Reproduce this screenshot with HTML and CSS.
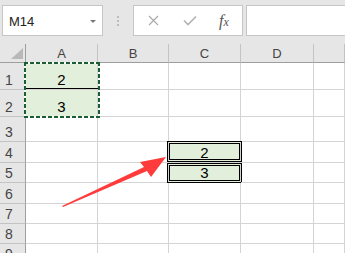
FILE: index.html
```html
<!DOCTYPE html>
<html lang="en">
<head>
  <meta charset="UTF-8">
  <title>Sheet</title>
  <link rel="stylesheet" href="styles.css">
</head>
<body>
  <div class="page">
    <div class="toolbar">
      <div class="name-box">
        <span>M14</span>
        <span class="drop"></span>
      </div>
      <div class="dots"><i></i><i></i><i></i></div>
      <div class="fx-buttons">
        <svg class="ico" width="11" height="11" viewBox="0 0 11 11"><path d="M1 1L10 10M10 1L1 10" stroke="#a9a9a9" stroke-width="1.2" fill="none"/></svg>
        <svg class="ico" width="14" height="11" viewBox="0 0 14 11"><path d="M1 5.5L5 9.5L13 1.5" stroke="#b3b3b3" stroke-width="1.6" fill="none"/></svg>
        <span class="fx">f<small>x</small></span>
      </div>
      <div class="formula"></div>
    </div>

    <div class="sheet">
      <div class="hd corner"><span class="tri"></span></div>
      <div class="hd col">A</div>
      <div class="hd col">B</div>
      <div class="hd col">C</div>
      <div class="hd col">D</div>
      <div class="hd col"></div>

      <div class="hd row">1</div>
      <div class="cell fill">2<span class="dbl a1"></span><span class="copy-range"></span></div>
      <div class="cell"></div><div class="cell"></div><div class="cell"></div><div class="cell"></div>

      <div class="hd row">2</div>
      <div class="cell fill">3</div>
      <div class="cell"></div><div class="cell"></div><div class="cell"></div><div class="cell"></div>

      <div class="hd row">3</div>
      <div class="cell"></div><div class="cell"></div><div class="cell"></div><div class="cell"></div><div class="cell"></div>

      <div class="hd row">4</div>
      <div class="cell"></div><div class="cell"></div>
      <div class="cell fill">2<span class="dbl c4"></span></div>
      <div class="cell"></div><div class="cell"></div>

      <div class="hd row">5</div>
      <div class="cell"></div><div class="cell"></div>
      <div class="cell fill">3<span class="dbl c5"></span></div>
      <div class="cell"></div><div class="cell"></div>

      <div class="hd row">6</div>
      <div class="cell"></div><div class="cell"></div><div class="cell"></div><div class="cell"></div><div class="cell"></div>

      <div class="hd row">7</div>
      <div class="cell"></div><div class="cell"></div><div class="cell"></div><div class="cell"></div><div class="cell"></div>

      <div class="hd row">8</div>
      <div class="cell"></div><div class="cell"></div><div class="cell"></div><div class="cell"></div><div class="cell"></div>

      <div class="hd row">9</div>
      <div class="cell"></div><div class="cell"></div><div class="cell"></div><div class="cell"></div><div class="cell"></div>
    </div>

    <svg class="arrow" width="345" height="253" viewBox="0 0 345 253">
      <polygon points="62,206 144,167 140,162 166,157 151,177 147,171 63,207" fill="#ff3b3b"/>
    </svg>
  </div>
</body>
</html>
```

FILE: styles.css
```css
body {
  margin: 0;
  background-color: #fff;
  font-family: "Liberation Sans", Arial, sans-serif;
  overflow: hidden;
}

.page {
  position: relative;
  width: 345px;
  height: 253px;
  overflow: hidden;
}

/* Formula bar */
.toolbar {
  height: 44px;
  background-color: #e6e6e6;
  display: flex;
  align-items: flex-start;
  padding-top: 5px;
  box-sizing: border-box;
}

.name-box {
  margin-left: 2px;
  width: 101px;
  height: 31px;
  box-sizing: border-box;
  background-color: #fff;
  border: 1px solid #c6c6c6;
  display: flex;
  align-items: center;
  justify-content: space-between;
  padding: 1px 6px 0 6px;
  font-size: 13px;
  color: #222;
}

.drop {
  width: 0;
  height: 0;
  border-left: 3px solid transparent;
  border-right: 3px solid transparent;
  border-top: 3px solid #7a7a7a;
}

.dots {
  width: 30px;
  display: flex;
  flex-direction: column;
  align-items: center;
  gap: 2px;
  padding-top: 11px;
}

.dots i {
  width: 2px;
  height: 2px;
  background-color: #bcbcbc;
}

.fx-buttons {
  width: 110px;
  height: 31px;
  box-sizing: border-box;
  background-color: #fff;
  border: 1px solid #c6c6c6;
  display: flex;
  align-items: center;
  padding-left: 14px;
  gap: 24px;
}

.fx {
  font-family: "Liberation Serif", serif;
  font-style: italic;
  font-size: 16px;
  color: #555;
  margin-left: -2px;
}

.fx small {
  font-size: 12px;
}

.formula {
  flex: 1;
  margin-left: 3px;
  height: 31px;
  box-sizing: border-box;
  background-color: #fff;
  border: 1px solid #c6c6c6;
  border-right: none;
}

/* Grid */
.sheet {
  display: grid;
  grid-template-columns: 26px 72px 71px 72px 73px 1fr;
  grid-template-rows: 19px 27px 27px 25px 21px 20px 21px 20px 20px 20px;
}

.hd {
  background-color: #e6e6e6;
  box-sizing: border-box;
  color: #444;
  font-size: 13px;
  line-height: 13px;
  display: flex;
  align-items: flex-end;
}

.hd.col {
  justify-content: center;
  border-bottom: 1px solid #9e9e9e;
  border-right: 1px solid #c3c3c3;
  padding-bottom: 2px;
}

.hd.row {
  border-right: 1px solid #9e9e9e;
  border-bottom: 1px solid #c3c3c3;
  padding: 0 0 2px 5px;
  font-size: 14px;
}

.corner {
  border-right: 1px solid #9e9e9e;
  border-bottom: 1px solid #9e9e9e;
  justify-content: flex-end;
  padding: 0 2px 3px 0;
}

.tri {
  width: 0;
  height: 0;
  border-left: 12px solid transparent;
  border-bottom: 11px solid #b9b9b9;
}

.cell {
  position: relative;
  box-sizing: border-box;
  border-right: 1px solid #d4d4d4;
  border-bottom: 1px solid #d4d4d4;
  font-size: 15px;
  line-height: 15px;
  color: #000;
  display: flex;
  align-items: flex-end;
  justify-content: center;
  padding-bottom: 2px;
}

.cell.fill {
  background-color: #e2efda;
}

/* borders drawn over the cells */
.dbl {
  position: absolute;
  border: 3px double #000;
  pointer-events: none;
}

.a1 { left: 0; right: -1px; bottom: -2px; height: 0; border-width: 0 0 3px 0; }
.c4 { top: -1px; left: -2px; right: -2px; bottom: 0; }
.c5 { top: 0; left: -2px; right: -2px; bottom: -1px; }

.copy-range {
  position: absolute;
  top: -1px;
  left: -2px;
  width: 76px;
  height: 56px;
  z-index: 1;
  background:
    repeating-linear-gradient(90deg, #1b5e32 0 4px, #fff 4px 6px) top left / 100% 2px no-repeat,
    repeating-linear-gradient(90deg, #1b5e32 0 4px, #fff 4px 6px) bottom left / 100% 2px no-repeat,
    repeating-linear-gradient(180deg, #1b5e32 0 4px, #fff 4px 6px) top left / 2px 100% no-repeat,
    repeating-linear-gradient(180deg, #1b5e32 0 4px, #fff 4px 6px) top right / 2px 100% no-repeat;
}

.arrow {
  position: absolute;
  left: 0;
  top: 0;
  pointer-events: none;
}
```
